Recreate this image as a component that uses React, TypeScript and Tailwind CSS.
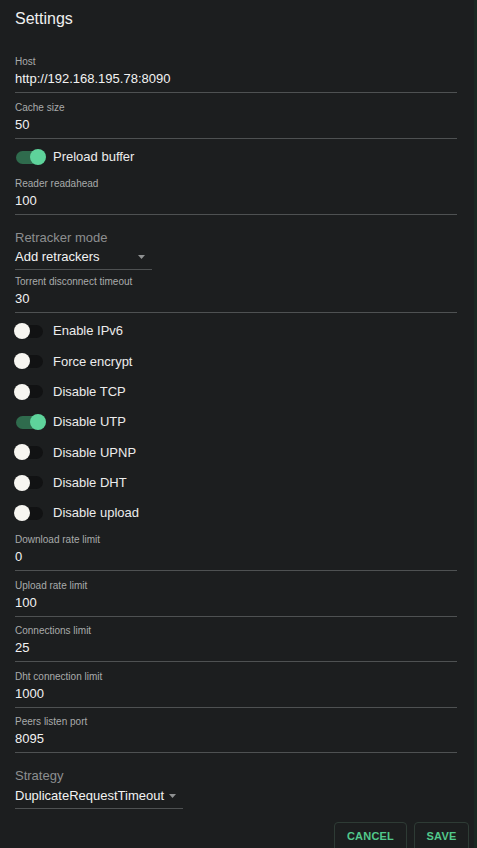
import React from "react";

const font = { fontFamily: '"Liberation Sans", Arial, sans-serif' };

const Field = ({ label, value, className = "" }: { label: string; value: string; className?: string }) => (
  <div className={`h-[37px] border-b border-[#4e5152] ${className}`}>
    <div className="text-[10px] leading-[12px] text-[#a9abab]">{label}</div>
    <div className="mt-[3px] text-[13px] leading-[16px] text-[#f2f2f2]">{value}</div>
  </div>
);

const Select = ({
  label,
  value,
  width,
  gap,
  className = "",
}: {
  label: string;
  value: string;
  width: string;
  gap: string;
  className?: string;
}) => (
  <div className={`${width} border-b border-[#4e5152] pb-[4px] ${className}`}>
    <div className="text-[13px] leading-[16px] text-[#8d8f90]">{label}</div>
    <div className={`${gap} flex items-center justify-between pr-[7px] text-[13px] leading-[16px] text-[#f2f2f2]`}>
      <span>{value}</span>
      <svg width="7" height="4" viewBox="0 0 7 4">
        <path d="M0 0h7L3.5 4z" fill="#8f9192" />
      </svg>
    </div>
  </div>
);

const Switch = ({ on = false }: { on?: boolean }) => (
  <div className="relative -ml-[1px] h-[16px] w-[32px] shrink-0">
    <div
      className={`absolute left-[2px] right-[3px] top-[1.5px] h-[13px] rounded-full ${
        on ? "bg-[#2f6b4d]" : "bg-[#111213]"
      }`}
    />
    <div
      className={`absolute top-0 h-[16px] w-[16px] rounded-full ${
        on ? "right-0 bg-[#5ed39b]" : "left-0 bg-[#f7f6f1]"
      }`}
    />
  </div>
);

const Toggle = ({ label, on = false }: { label: string; on?: boolean }) => (
  <div className="flex h-[30.33px] items-center">
    <Switch on={on} />
    <span className="ml-[7px] text-[13px] text-[#ececec]">{label}</span>
  </div>
);

export default function App() {
  return (
    <div className="flex h-screen overflow-hidden bg-[#1c1e1f]" style={font}>
      <div className="min-w-0 flex-1 pl-[15px] pr-[17px]">
        <div className="mt-[10px] text-[16px] leading-[18px] text-[#f0f0f0]">Settings</div>

        <Field className="mt-[28px]" label="Host" value="http://192.168.195.78:8090" />
        <Field className="mt-[9px]" label="Cache size" value="50" />

        <div className="mt-[6px] flex h-[24px] items-center">
          <Switch on />
          <span className="ml-[7px] text-[13px] text-[#ececec]">Preload buffer</span>
        </div>

        <Field className="mt-[9px]" label="Reader readahead" value="100" />

        <Select className="mt-[15px]" width="w-[137px]" gap="mt-[3px]" label="Retracker mode" value="Add retrackers" />

        <Field className="mt-[6px]" label="Torrent disconnect timeout" value="30" />

        <div className="mt-[3px]">
          <Toggle label="Enable IPv6" />
          <Toggle label="Force encrypt" />
          <Toggle label="Disable TCP" />
          <Toggle label="Disable UTP" on />
          <Toggle label="Disable UPNP" />
          <Toggle label="Disable DHT" />
          <Toggle label="Disable upload" />
        </div>

        <Field className="mt-[6px]" label="Download rate limit" value="0" />
        <Field className="mt-[8.5px]" label="Upload rate limit" value="100" />
        <Field className="mt-[8.5px]" label="Connections limit" value="25" />
        <Field className="mt-[8.5px]" label="Dht connection limit" value="1000" />
        <Field className="mt-[8.5px]" label="Peers listen port" value="8095" />

        <Select className="mt-[15px]" width="w-[168px]" gap="mt-[4px]" label="Strategy" value="DuplicateRequestTimeout" />

        <div className="-mr-[12px] mt-[13px] flex justify-end gap-[7px]">
          <button className="h-[30px] w-[73px] shrink-0 rounded-[4px] border border-[#2e3b35] pb-[2px] text-[11px] font-bold tracking-[0.2px] text-[#52c98c]">
            CANCEL
          </button>
          <button className="h-[30px] w-[55px] shrink-0 rounded-[4px] border border-[#2e3b35] pb-[2px] text-[11px] font-bold tracking-[0.2px] text-[#52c98c]">
            SAVE
          </button>
        </div>
      </div>
      <div className="w-[3px] bg-[#1a2822]" />
    </div>
  );
}
